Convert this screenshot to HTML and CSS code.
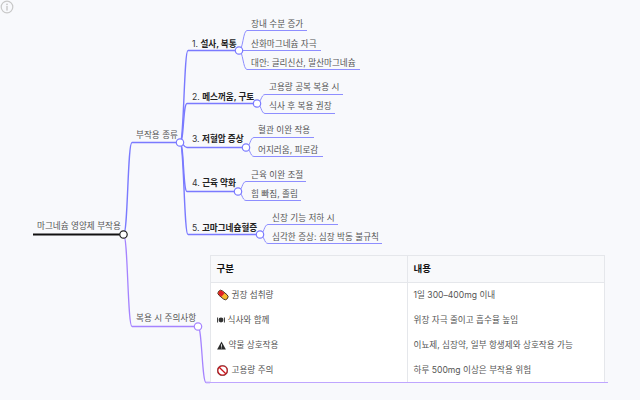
FILE: index.html
```html
<!DOCTYPE html>
<html lang="ko">
<head>
<meta charset="utf-8">
<title>마그네슘 영양제 부작용</title>
<link rel="stylesheet" href="styles.css">
</head>
<body>
<main class="canvas">
  <svg class="info" width="14" height="14" viewBox="0 0 14 14" aria-hidden="true">
    <circle class="info-ring" cx="7" cy="7" r="5.8"/>
    <circle class="info-dot" cx="7" cy="4.3" r="0.9"/>
    <rect class="info-dot" x="6.3" y="6" width="1.4" height="4.6"/>
  </svg>
  <svg class="links" width="640" height="400" viewBox="0 0 640 400" aria-hidden="true">
    <g class="l-blue">
      <path d="M123.5 234.5C128 234.5 127.500 142.500 132 142.500H176"/>
      <path d="M180 142.500C184 142.500 184 50.500 188 50.500H235"/>
      <path d="M180 142.500C184 142.500 183 103.500 187 103.500H253"/>
      <path d="M180 142.500C184 142.500 183 147.500 187 147.500H242"/>
      <path d="M180 142.500C184 142.500 183 191.500 187 191.500H234"/>
      <path d="M180 142.500C184 142.500 184 234.500 188 234.500H256"/>
    </g>
    <g class="l-leaf">
      <path d="M239 50.500C243 50.500 243 30.500 247 30.500H307"/>
      <path d="M239 50.500H321"/>
      <path d="M239 50.500C243 50.500 243 69.500 247 69.500H360"/>
      <path d="M257 103.500C261 103.500 261 94.500 265 94.500H343"/>
      <path d="M257 103.500C261 103.500 261 113.500 265 113.500H335"/>
      <path d="M246 147.500C250 147.500 250 137.500 254 137.500H314"/>
      <path d="M246 147.500C250 147.500 250 156.500 254 156.500H323"/>
      <path d="M238 191.500C242 191.500 242 181.500 246 181.500H306"/>
      <path d="M238 191.500C242 191.500 242 200.500 246 200.500H301"/>
      <path d="M260 234.500C264 234.500 264 224.500 268 224.500H338"/>
      <path d="M260 234.500C264 234.500 264 243.500 268 243.500H382"/>
    </g>
    <g class="l-purple">
      <path d="M123.500 234.500C128 234.500 127.500 326.500 132 326.500H194"/>
      <path d="M198 326.500C202 326.500 202 382.500 206 382.500H210"/>
    </g>
    <path class="l-root" d="M33 234.500H120"/>
  </svg>

  <span class="node root">마그네슘 영양제 부작용</span>
  <span class="node kinds">부작용 종류</span>
  <span class="node c1">1. <b>설사, 복통</b></span>
  <span class="node c2">2. <b>메스꺼움, 구토</b></span>
  <span class="node c3">3. <b>저혈압 증상</b></span>
  <span class="node c4">4. <b>근육 약화</b></span>
  <span class="node c5">5. <b>고마그네슘혈증</b></span>
  <span class="node a1">장내 수분 증가</span>
  <span class="node a2">산화마그네슘 자극</span>
  <span class="node a3">대안: 글리신산, 말산마그네슘</span>
  <span class="node b1">고용량 공복 복용 시</span>
  <span class="node b2">식사 후 복용 권장</span>
  <span class="node d1">혈관 이완 작용</span>
  <span class="node d2">어지러움, 피로감</span>
  <span class="node e1">근육 이완 조절</span>
  <span class="node e2">힘 빠짐, 졸림</span>
  <span class="node f1">신장 기능 저하 시</span>
  <span class="node f2">심각한 증상: 심장 박동 불규칙</span>
  <span class="node care">복용 시 주의사항</span>

  <table class="info-table">
    <thead>
      <tr><th class="col-a">구분</th><th>내용</th></tr>
    </thead>
    <tbody>
      <tr>
        <td><span class="cell">
          <svg class="ic ic-pill" width="12" height="12" viewBox="0 0 12 12" aria-hidden="true">
            <g transform="rotate(40 6 6)">
              <rect x="0.300" y="3.200" width="11.400" height="5.600" rx="2.800" fill="#f6b92f" stroke="#2a1a1a" stroke-width="0.800"/>
              <path d="M6 3.600H3.100A2.400 2.400 0 0 0 3.100 8.400H6Z" fill="#e01f26"/>
            </g>
          </svg>권장 섭취량</span></td>
        <td>1일 300–400mg 이내</td>
      </tr>
      <tr>
        <td><span class="cell">
          <svg class="ic ic-food" width="8" height="8" viewBox="0 0 8 8" aria-hidden="true">
            <circle cx="4" cy="4" r="2.400" fill="#333"/>
            <path d="M0.600 1.500V6.500M7.400 1.500V6.500" stroke="#333" stroke-width="1" fill="none"/>
          </svg>식사와 함께</span></td>
        <td>위장 자극 줄이고 흡수율 높임</td>
      </tr>
      <tr>
        <td><span class="cell">
          <svg class="ic ic-warn" width="9" height="9" viewBox="0 0 9 9" aria-hidden="true">
            <path d="M4.500 0.400L8.900 8.400H0.100Z" fill="#2b2b2b"/>
            <path d="M4.500 3.200V5.800M4.500 6.500V7.400" stroke="#fff" stroke-width="0.800" fill="none"/>
          </svg>약물 상호작용</span></td>
        <td>이뇨제, 심장약, 일부 항생제와 상호작용 가능</td>
      </tr>
      <tr>
        <td><span class="cell">
          <svg class="ic ic-ban" width="11" height="11" viewBox="0 0 11 11" aria-hidden="true">
            <circle cx="5.500" cy="5.500" r="4.700" fill="#fff" stroke="#c9151b" stroke-width="1.300"/>
            <circle cx="5.500" cy="5.500" r="5.300" fill="none" stroke="#311" stroke-width="0.400"/>
            <path d="M2.200 2.200L8.800 8.800" stroke="#c9151b" stroke-width="1.300"/>
          </svg>고용량 주의</span></td>
        <td>하루 500mg 이상은 부작용 위험</td>
      </tr>
    </tbody>
  </table>

  <svg class="links over" width="640" height="400" viewBox="0 0 640 400" aria-hidden="true">
    <path class="l-table" d="M206 382.500H608"/>
    <circle class="dot d-blue" cx="180" cy="142.500" r="3.700"/>
    <circle class="dot d-blue" cx="239" cy="50.500" r="3.700"/>
    <circle class="dot d-blue" cx="257" cy="103.500" r="3.700"/>
    <circle class="dot d-blue" cx="246" cy="147.500" r="3.700"/>
    <circle class="dot d-blue" cx="238" cy="191.500" r="3.700"/>
    <circle class="dot d-blue" cx="260" cy="234.500" r="3.700"/>
    <circle class="dot d-purple" cx="198" cy="326.500" r="3.700"/>
    <circle class="dot d-root" cx="123.500" cy="234.500" r="3.700"/>
  </svg>
</main>
</body>
</html>
```
FILE: styles.css
```css
* { box-sizing: border-box; }
html, body { margin: 0; padding: 0; }
body {
  width: 640px;
  height: 400px;
  overflow: hidden;
  background: #f8f9fc;
  font-family: Inter, "Noto Sans CJK KR", sans-serif;
  color: #444;
}
.canvas { position: relative; width: 640px; height: 400px; overflow: hidden; }
.info { position: absolute; left: 0; top: 0; }
.info-ring { fill: none; stroke: #c8c8c8; stroke-width: 1.2; }
.info-dot { fill: #c8c8c8; }
.links { position: absolute; left: 0; top: 0; }
.links path { fill: none; }
.l-blue path { stroke: #7a7aff; stroke-width: 1.4; }
.l-leaf path { stroke: #8e8eff; stroke-width: 1; }
.l-purple path { stroke: #a583ff; stroke-width: 1.3; }
.l-root { stroke: #111; stroke-width: 2; }
.links .l-table { stroke: #bfa6ff; stroke-width: 1.2; }
.dot { fill: #fff; stroke-width: 1.2; }
.d-blue { stroke: #7a7aff; }
.d-purple { stroke: #a583ff; }
.d-root { stroke: #222; }

.node {
  position: absolute;
  font-size: 8.6px;
  line-height: 12px;
  white-space: nowrap;
  color: #555;
}
.node b { font-weight: 700; color: #222; }
.root { left: 37px; top: 220px; }
.kinds { left: 136px; top: 129px; }
.c1 { left: 192px; top: 38px; color: #333; }
.c2 { left: 192px; top: 91px; color: #333; }
.c3 { left: 192px; top: 133px; color: #333; }
.c4 { left: 192px; top: 177px; color: #333; }
.c5 { left: 192px; top: 222px; color: #333; }
.a1 { left: 251px; top: 18px; }
.a2 { left: 251px; top: 38px; }
.a3 { left: 251px; top: 57px; }
.b1 { left: 269px; top: 81px; }
.b2 { left: 269px; top: 100px; }
.d1 { left: 258px; top: 124px; }
.d2 { left: 258px; top: 144px; }
.e1 { left: 251px; top: 169px; }
.e2 { left: 251px; top: 188px; }
.f1 { left: 272px; top: 212px; }
.f2 { left: 272px; top: 231px; }
.care { left: 136px; top: 312px; }

.info-table {
  position: absolute;
  left: 210px;
  top: 255px;
  width: 395px;
  border-collapse: collapse;
  table-layout: fixed;
  background: #fff;
  font-size: 8.6px;
  line-height: 12px;
  color: #555;
}
.info-table th {
  height: 27px;
  padding: 0 5.500px;
  text-align: left;
  font-size: 9.500px;
  font-weight: 700;
  color: #111;
  background: #f8f9fb;
  border: 1px solid #e5e7eb;
}
.info-table td {
  height: 25px;
  padding: 0 5.500px;
  white-space: nowrap;
  border-left: 1px solid #e5e7eb;
  border-right: 1px solid #e5e7eb;
}
.col-a { width: 197px; }
.cell { display: flex; align-items: center; }
.ic { flex: none; }
.ic-pill { margin-right: 3px; }
.ic-food { margin-right: 3px; }
.ic-warn { margin-right: 3px; }
.ic-ban { margin-right: 4px; }
```
